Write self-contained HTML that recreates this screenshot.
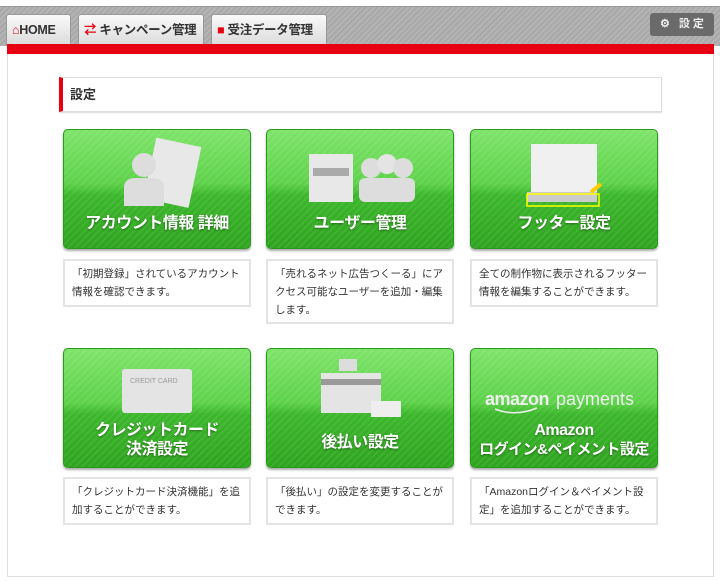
<!DOCTYPE html>
<html><head><meta charset="utf-8"><style>
*{margin:0;padding:0;box-sizing:border-box}
body{width:720px;height:581px;background:#fff;font-family:"Liberation Sans","Noto Sans CJK JP",sans-serif;position:relative;overflow:hidden}
.top{position:absolute;left:0;top:6px;width:720px;height:40px;background:repeating-linear-gradient(135deg,#b4b4b4 0 2px,#a8a8a8 2px 4px);border-top:1px solid #999}
.tab{position:absolute;top:14px;height:31px;background:linear-gradient(#fafafa,#dcdcdc);border:1px solid #999;border-bottom:none;border-radius:3px 3px 0 0;font-size:12.5px;font-weight:bold;color:#333;line-height:30px;padding-left:5px;white-space:nowrap;letter-spacing:-0.3px}
.red{position:absolute;left:7px;top:44px;width:707px;height:10px;background:#e60012}
.panel{position:absolute;left:7px;top:54px;width:707px;height:523px;border:1px solid #ddd;border-top:none;background:#fff}
.set{position:absolute;left:650px;top:13px;width:64px;height:23px;background:#6a6a6a;border-radius:3px;color:#eee;font-size:11px;font-weight:bold;line-height:23px;padding-left:10px;letter-spacing:3px}
.hd{position:absolute;left:59px;top:77px;width:603px;height:35px;border:1px solid #ddd;border-left:4px solid #e60012;background:#fff;font-size:13px;font-weight:bold;color:#333;line-height:34px;padding-left:7px;box-shadow:0 1px 1px #ddd}
.card{position:absolute;width:188px;height:120px;border-radius:5px;border:1px solid #2a9a1a;background:linear-gradient(#7ee46a 0%,#5ed24a 45%,#3cb72c 55%,#2ea41e 100%);box-shadow:0 2px 2px #aaa;overflow:hidden}
.card:after{content:"";position:absolute;inset:0;background:repeating-linear-gradient(135deg,rgba(255,255,255,.08) 0 2px,rgba(255,255,255,0) 2px 5px)}
.card .t{position:absolute;left:-10px;right:-10px;color:#fff;font-weight:bold;font-size:16px;text-align:center;line-height:19px;text-shadow:0 1px 2px rgba(0,0,0,.4);z-index:2;white-space:nowrap;letter-spacing:-0.5px}
.d{position:absolute;width:188px;border:2px solid #e4e4e4;background:#fff;font-size:10.5px;color:#333;line-height:18px;padding:4px 6px 4px 7px}
svg{position:absolute;z-index:2}
</style></head><body>
<div class="top"></div>
<div class="tab" style="left:6px;width:65px"><span style="color:#e60012">⌂</span>HOME</div>
<div class="tab" style="left:78px;width:126px"><span style="color:#e60012">⇄</span> キャンペーン管理</div>
<div class="tab" style="left:211px;width:116px"><span style="color:#e60012">■</span> 受注データ管理</div>
<div class="set">⚙ 設定</div>
<div class="red"></div>
<div class="panel"></div>
<div class="hd">設定</div>

<div class="card" style="left:63px;top:129px">
<svg width="188" height="80"><rect x="86" y="12" width="46" height="62" fill="#e8e8e8" transform="rotate(12 110 40)"/><circle cx="80" cy="35" r="12" fill="#ddd"/><path d="M60 76 v-18 q0-10 12-10 h16 q12 0 12 10 v18z" fill="#ddd"/></svg>
<div class="t" style="top:84px">アカウント情報 詳細</div></div>
<div class="card" style="left:266px;top:129px">
<svg width="188" height="80"><rect x="42" y="24" width="44" height="48" fill="#e8e8e8"/><rect x="46" y="38" width="36" height="8" fill="#aaa"/><circle cx="104" cy="38" r="10" fill="#ddd"/><circle cx="120" cy="34" r="10" fill="#e4e4e4"/><circle cx="136" cy="38" r="10" fill="#ddd"/><rect x="92" y="48" width="56" height="24" rx="6" fill="#ddd"/></svg>
<div class="t" style="top:84px">ユーザー管理</div></div>
<div class="card" style="left:470px;top:129px">
<svg width="188" height="80"><rect x="60" y="14" width="66" height="56" fill="#f0f0f0"/><rect x="56" y="62" width="70" height="10" fill="#ccc"/><rect x="56" y="64" width="72" height="12" fill="none" stroke="#ff0" stroke-width="1.5"/><path d="M120 62 l10 -8" stroke="#fc0" stroke-width="4"/></svg>
<div class="t" style="top:84px">フッター設定</div></div>

<div class="d" style="left:63px;top:259px;height:48px">「初期登録」されているアカウント情報を確認できます。</div>
<div class="d" style="left:266px;top:259px;height:65px">「売れるネット広告つくーる」にアクセス可能なユーザーを追加・編集します。</div>
<div class="d" style="left:470px;top:259px;height:48px">全ての制作物に表示されるフッター情報を編集することができます。</div>

<div class="card" style="left:63px;top:348px">
<svg width="188" height="80"><rect x="58" y="20" width="70" height="44" rx="3" fill="#e4e4e4"/><text x="66" y="34" font-size="7" fill="#999" font-family="Liberation Sans">CREDIT CARD</text></svg>
<div class="t" style="top:72px">クレジットカード<br>決済設定</div></div>
<div class="card" style="left:266px;top:348px">
<svg width="188" height="80"><rect x="72" y="10" width="18" height="12" fill="#ddd"/><rect x="54" y="24" width="60" height="40" fill="#e4e4e4"/><rect x="54" y="30" width="60" height="6" fill="#999"/><rect x="104" y="52" width="30" height="16" fill="#eee"/></svg>
<div class="t" style="top:84px">後払い設定</div></div>
<div class="card" style="left:470px;top:348px">
<svg width="188" height="70"><text x="14" y="56" font-size="18" fill="#eee" font-family="Liberation Sans" style="font-weight:bold" letter-spacing="-0.5">amazon</text><text x="85" y="56" font-size="18" fill="#eee" font-family="Liberation Sans">payments</text><path d="M24 60 q20 8 42 -1" stroke="#eee" stroke-width="1.5" fill="none"/></svg>
<div class="t" style="top:72px">Amazon<br><span style="font-size:15px">ログイン&amp;ペイメント設定</span></div></div>

<div class="d" style="left:63px;top:477px;height:48px">「クレジットカード決済機能」を追加することができます。</div>
<div class="d" style="left:266px;top:477px;height:48px">「後払い」の設定を変更することができます。</div>
<div class="d" style="left:470px;top:477px;height:48px">「Amazonログイン＆ペイメント設定」を追加することができます。</div>
</body></html>
